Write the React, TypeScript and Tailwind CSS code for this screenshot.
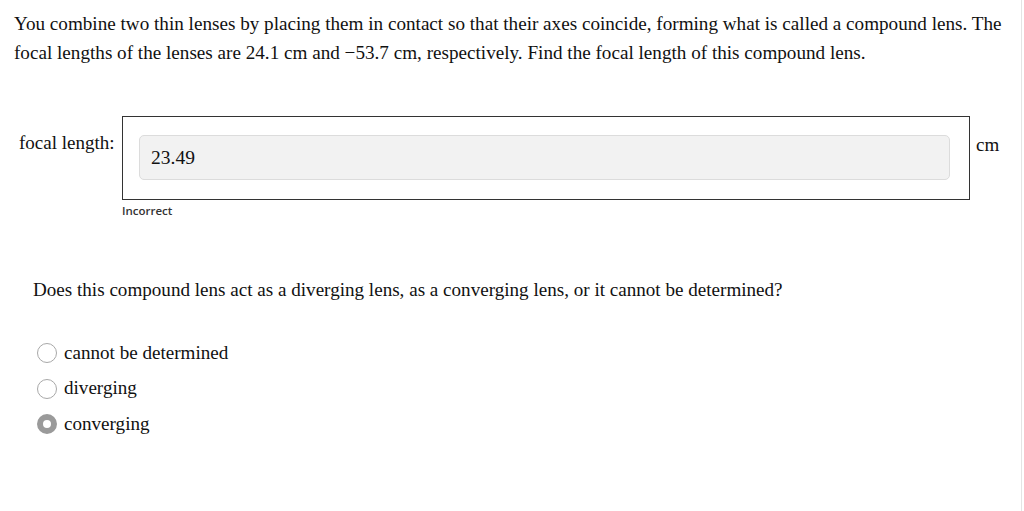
const serif = "font-['Liberation_Serif','Times_New_Roman',serif]";

function Radio({ label, checked }: { label: string; checked?: boolean }) {
  return (
    <label className="flex items-center h-[35.5px]">
      <span
        className={
          checked
            ? 'w-[20px] h-[20px] rounded-full border-[6px] border-[#9a9a9a] bg-white shrink-0'
            : 'w-[20px] h-[20px] rounded-full border border-[#a8a8a8] bg-white shrink-0'
        }
      />
      <span className="ml-[7px] text-[19.1px] text-[#111]">{label}</span>
    </label>
  );
}

export default function App() {
  return (
    <div className={`${serif} relative w-[1024px] h-[511px] bg-white text-[#111] overflow-hidden`}>
      <div className="absolute top-0 right-[2px] w-px h-full bg-[#e4e4e4]" />
      <p className="pl-[14px] pr-[10px] pt-[9px] text-[19.15px] leading-[29px] whitespace-nowrap">
        You combine two thin lenses by placing them in contact so that their axes coincide, forming what is called a
        compound lens. The
        <br />
        focal lengths of the lenses are 24.1 cm and −53.7 cm, respectively. Find the focal length of this compound lens.
      </p>

      <div className="flex mt-[49px]">
        <div className="w-[122px] pl-[19px] pt-[15px] text-[19px] leading-[24px]">focal length:</div>
        <div className="flex flex-col">
          <div className="w-[848px] h-[84px] border border-[#333] pt-[18px] pl-[16px] pr-[19px]">
            <div className="h-[45px] rounded-[5px] border border-[#dcdcdc] bg-[#f2f2f2] flex items-center pl-[11px] text-[19.5px]">
              23.49
            </div>
          </div>
          <div className="mt-[2px] text-[11.5px] font-semibold text-[#333] font-['Open_Sans',sans-serif]">
            Incorrect
          </div>
        </div>
        <div className="pl-[6px] pt-[17px] text-[19px] leading-[24px]">cm</div>
      </div>

      <p className="pl-[33px] mt-[59px] text-[19.1px] leading-[24px]">
        Does this compound lens act as a diverging lens, as a converging lens, or it cannot be determined?
      </p>

      <div className="pl-[37px] mt-[33px] flex flex-col">
        <Radio label="cannot be determined" />
        <Radio label="diverging" />
        <Radio label="converging" checked />
      </div>
    </div>
  );
}
